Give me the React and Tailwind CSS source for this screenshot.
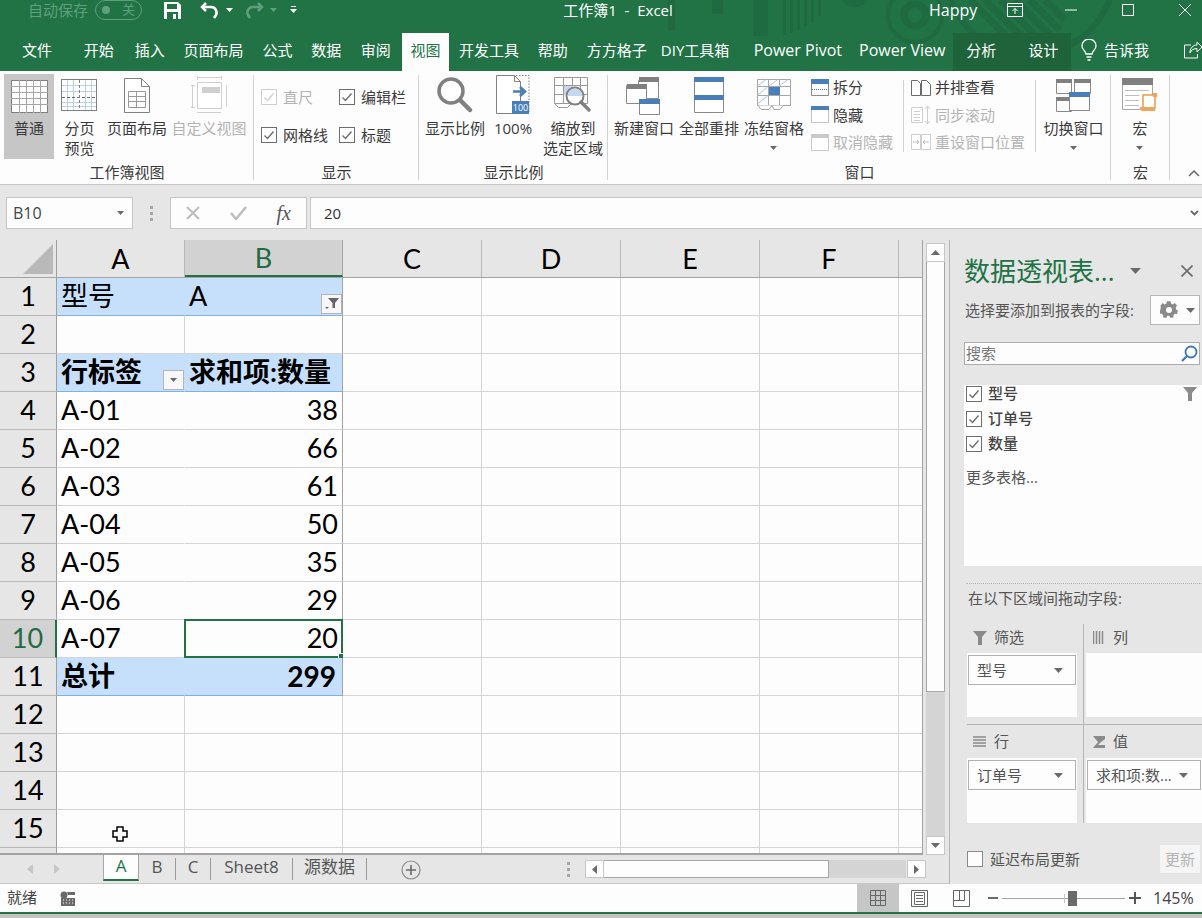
import React from "react";

const CJK = "[font-family:'Open_Sans','Noto_Sans_CJK_SC',sans-serif]";

function Caret({ c = "#6a6a6a", w = 9, h = 5 }) {
  return (
    <svg width={w} height={h} viewBox="0 0 9 5" className="shrink-0">
      <path d="M0 0h9L4.5 5z" fill={c} />
    </svg>
  );
}

function Check({ disabled = false }) {
  const b = disabled ? "#cfcfcf" : "#6e6e6e";
  const k = disabled ? "#cfcfcf" : "#6e6e6e";
  return (
    <svg width="16" height="16" viewBox="0 0 16 16" className="shrink-0">
      <rect x=".5" y=".5" width="15" height="15" fill="#fff" stroke={b} />
      <path d="M3.5 8.5l3 3 6-7" fill="none" stroke={k} strokeWidth="1.4" />
    </svg>
  );
}

function IconNormal() {
  const v = [8.5, 15.5, 22.5, 29.5];
  const h = [6.5, 12.5, 18.5, 24.5];
  return (
    <svg width="37" height="33" viewBox="0 0 37 33">
      <rect x=".5" y=".5" width="36" height="32" fill="#fff" stroke="#808080" />
      {v.map((x) => <path key={x} d={`M${x} 0v33`} stroke="#a6a6a6" />)}
      {h.map((y) => <path key={y} d={`M0 ${y}h37`} stroke="#a6a6a6" />)}
    </svg>
  );
}
function IconBreak() {
  return (
    <svg width="37" height="33" viewBox="0 0 37 33">
      <rect x=".5" y=".5" width="35" height="31" fill="#fff" stroke="#808080" />
      {[6, 12, 24, 30].map((x) => <path key={x} d={`M${x + .5} 1v30`} stroke="#b9d0ea" />)}
      {[6, 12, 23, 27].map((y) => <path key={y} d={`M1 ${y + .5}h34`} stroke="#b9d0ea" />)}
      <path d="M1 18.5h34" stroke="#6a6a6a" strokeDasharray="3 2" />
      <path d="M18.5 1v30" stroke="#808080" strokeDasharray="3 2" />
    </svg>
  );
}
function IconPage() {
  return (
    <svg width="26" height="35" viewBox="0 0 26 35">
      <path d="M.5.5h17l8 8v26H.5z" fill="#fff" stroke="#808080" />
      <path d="M17.5.5v8h8" fill="none" stroke="#808080" />
      <path d="M4.5 13.5h17v16h-17zM4.5 18.5h17M4.5 23.5h17M12.5 13.5v16" fill="none" stroke="#999" />
    </svg>
  );
}
function IconCustom() {
  return (
    <svg width="37" height="38" viewBox="0 0 37 38">
      <path d="M6 1.500h24M6.500 0v4M30.500 0v4M1.500 9v22M0 9.500h4M0 31.500h4" stroke="#cfcfcf" fill="none" />
      <path d="M6.500 6.500h24v26h-24z" fill="#fff" stroke="#cfcfcf" />
      <rect x="11" y="11" width="18" height="6" fill="#cfcfcf" />
      <path d="M35.500 9v22M6 36.500h24" stroke="#cfcfcf" />
    </svg>
  );
}
function IconMag() {
  return (
    <svg width="36" height="36" viewBox="0 0 36 36">
      <circle cx="14" cy="14" r="12" fill="#fff" stroke="#808080" strokeWidth="3.500" />
      <path d="M23 23l10 10" stroke="#808080" strokeWidth="4.500" strokeLinecap="round" />
    </svg>
  );
}
function Icon100() {
  return (
    <svg width="34" height="40" viewBox="0 0 34 40">
      <path d="M.5.500h18l6 6v32H.5z" fill="#fff" stroke="#808080" />
      <path d="M18.500.5v6h6" fill="none" stroke="#808080" />
      <path d="M20 .5h13v38H.5" fill="none" stroke="#808080" strokeDasharray="1.500 1.500" />
      <path d="M17 16.500h11M24 12l5 4.500-5 4.500" fill="none" stroke="#4a7ebb" strokeWidth="2.600" />
      <rect x="16" y="26" width="17" height="13" fill="#4a7ebb" />
      <text x="24.500" y="36" fill="#fff" fontSize="9" textAnchor="middle" fontFamily="Open Sans">100</text>
    </svg>
  );
}
function IconZoomSel() {
  return (
    <svg width="38" height="36" viewBox="0 0 38 36">
      <path d="M.5.500h33v26H.5zM.5 8.500h33M.5 17.500h33M9.500.5v26M18.500.5v12M26.500.5v12" fill="#fff" stroke="#999" />
      <path d="M.5 26.500l4 4h9l4-4" fill="none" stroke="#999" />
      <rect x="10" y="9" width="9" height="9" fill="#c5d8ee" />
      <circle cx="21" cy="19" r="8.500" fill="#fff" stroke="#808080" strokeWidth="2" />
      <path d="M13.500 19a7.500 7.500 0 0 1 15 0z" fill="#c5d8ee" />
      <path d="M27 25l8 8" stroke="#808080" strokeWidth="3.500" strokeLinecap="round" />
    </svg>
  );
}
function IconNewWin() {
  return (
    <svg width="36" height="39" viewBox="0 0 36 39">
      <path d="M12.500 4.500h20v18h-20z" fill="#fff" stroke="#8a8a8a" />
      <rect x="13" y="1" width="20" height="5" fill="#808080" />
      <path d="M.5 9.500h20v18H.5z" fill="#fff" stroke="#8a8a8a" />
      <rect x="1" y="8" width="20" height="5" fill="#808080" />
      <path d="M13.500 23.500h20v15h-20z" fill="#fff" stroke="#8a8a8a" />
      <rect x="13" y="23" width="21" height="5" fill="#4a7ebb" />
    </svg>
  );
}
function IconArrange() {
  return (
    <svg width="30" height="36" viewBox="0 0 30 36">
      <path d="M.5.5h29v35H.5z" fill="#fff" stroke="#8a8a8a" />
      <rect width="30" height="5" fill="#4a7ebb" />
      <rect y="18" width="30" height="5" fill="#4a7ebb" />
    </svg>
  );
}
function IconFreeze() {
  return (
    <svg width="34" height="32" viewBox="0 0 34 32">
      <path d="M.5.500h33v26H.5zM.5 7.500h33M.5 16.500h33M11.500.5v26M22.500.500v26" fill="#fff" stroke="#a6a6a6" />
      <rect x="12" y="8" width="11" height="8" fill="#4a7ebb" />
      <path d="M.5 7L9 .5M12 7l9-6.500M22 7l9-6.500M.5 16l10-8M.5 25l10-8" stroke="#a9c4e3" fill="none" />
      <path d="M1 26.500l3 4h8l3-4M15 26.500l2 4h6l3-4" fill="#fff" stroke="#a6a6a6" />
    </svg>
  );
}
function IconSwitch() {
  return (
    <svg width="35" height="33" viewBox="0 0 35 33">
      <path d="M.5.500h15v14H.5zM18.500.500h16v14h-16zM.5 18.500h15v14H.5z" fill="#fff" stroke="#8a8a8a" />
      <rect width="16" height="4" fill="#808080" />
      <rect x="18" width="17" height="4" fill="#808080" />
      <rect y="18" width="16" height="4" fill="#808080" />
      <path d="M13.500 13.500h20v18h-20z" fill="#fff" stroke="#8a8a8a" />
      <rect x="13" y="13" width="21" height="5" fill="#4a7ebb" />
    </svg>
  );
}
function IconMacro() {
  return (
    <svg width="36" height="35" viewBox="0 0 36 35">
      <path d="M.5.500h30v31H.5z" fill="#fff" stroke="#a6a6a6" />
      <rect x="0" y="0" width="31" height="7" fill="#808080" />
      <path d="M3 12.500h24M3 17.500h14M3 22.500h14M3 27.500h14" stroke="#bdbdbd" />
      <path d="M21 17h12v13H21z" fill="#fff" stroke="#e8994a" strokeWidth="1.500" />
      <path d="M18 29h15v4H21a3 3 0 0 1-3-3z" fill="#eda75c" />
      <rect x="31" y="15" width="4" height="4" fill="#eda75c" />
    </svg>
  );
}
function Split() {
  return (
    <svg width="18" height="17" viewBox="0 0 18 17" className="shrink-0">
      <path d="M.5.500h17v16H.5z" fill="#fff" stroke="#8a8a8a" />
      <rect width="18" height="5" fill="#4a7ebb" />
      <path d="M1 10.500h16" stroke="#4a7ebb" strokeDasharray="1 1" />
    </svg>
  );
}
function HideIcon() {
  return (
    <svg width="18" height="17" viewBox="0 0 18 17" className="shrink-0">
      <path d="M.5.500h17v16H.5z" fill="#fff" stroke="#8a8a8a" strokeDasharray="1 1" />
      <rect width="18" height="4" fill="#4a7ebb" />
    </svg>
  );
}
function UnhideIcon() {
  return (
    <svg width="18" height="17" viewBox="0 0 18 17" className="shrink-0">
      <path d="M.5.500h17v16H.5z" fill="#fff" stroke="#c9c9c9" />
      <rect width="18" height="4" fill="#c9c9c9" />
    </svg>
  );
}
function SideBySide() {
  return (
    <svg width="20" height="16" viewBox="0 0 20 16" className="shrink-0">
      <path d="M.5.500h6l3 3v12h-9zM10.500 .500h5l4 4v11h-9z" fill="#fff" stroke="#6a6a6a" />
    </svg>
  );
}
function SyncIcon() {
  return (
    <svg width="20" height="20" viewBox="0 0 20 20" className="shrink-0">
      <path d="M.5 2.500h11v15H.5zM3 6.500h6M3 9.500h6M3 12.500h6M3 15.500h6" fill="#fff" stroke="#cfcfcf" />
      <path d="M16.500 1v18M14 4l2.500-3L19 4M14 16l2.500 3 2.500-3" fill="none" stroke="#cfcfcf" />
    </svg>
  );
}
function ResetIcon() {
  return (
    <svg width="20" height="16" viewBox="0 0 20 16" className="shrink-0">
      <path d="M.5.500h9v15h-9zM10.500.500h9v15h-9z" fill="#fff" stroke="#cfcfcf" />
      <path d="M2 8h6M6 6l2 2-2 2M18 8h-6M14 6l-2 2 2 2" fill="none" stroke="#bdbdbd" />
    </svg>
  );
}

function Big({ w, icon, lines, disabled, caret, active }) {
  return (
    <div className={`flex flex-col items-center shrink-0 ${w} ${active ? "bg-[#c6c6c6] h-[85px] mt-[3px]" : "h-[88px]"}`}>
      <div className={`flex items-center justify-center ${active ? "h-[45px]" : "h-[48px]"}`}>{icon}</div>
      <div className={`text-[15px] leading-[20px] text-center whitespace-nowrap mt-[-1px] ${disabled ? "text-[#b4b4b4]" : "text-[#3a3a3a]"}`}>
        {lines.map((l) => <div key={l}>{l}</div>)}
        {caret && <div className="flex justify-center items-center h-[20px]"><Caret w={7} h={4} /></div>}
      </div>
    </div>
  );
}

function Small({ icon, label, disabled }) {
  return (
    <div className="flex items-center h-[28px] gap-[4px] whitespace-nowrap">
      {icon}
      <span className={`text-[15px] ${disabled ? "text-[#b4b4b4]" : "text-[#3a3a3a]"}`}>{label}</span>
    </div>
  );
}

function Group({ w, label, children, last }) {
  return (
    <div className={`flex flex-col shrink-0 ${w} ${last ? "" : "relative"}`}>
      <div className="h-[91px] flex">{children}</div>
      <div className="h-[20px] text-center text-[15px] leading-[20px] text-[#3a3a3a]">{label}</div>
      <div className="absolute right-0 top-[4px] bottom-[4px] w-px bg-[#d2d2d2]" />
    </div>
  );
}

function Ribbon() {
  return (
    <div className="h-[114px] bg-[#fdfdfd] border-b border-[#c8c8c8] flex relative">
      <Group w="w-[254px]" label="工作簿视图">
        <div className="flex pl-[4px]">
          <Big w="w-[50px]" active icon={<IconNormal />} lines={["普通"]} />
          <Big w="w-[51px]" icon={<IconBreak />} lines={["分页", "预览"]} />
          <Big w="w-[64px]" icon={<IconPage />} lines={["页面布局"]} />
          <Big w="w-[80px]" disabled icon={<IconCustom />} lines={["自定义视图"]} />
        </div>
      </Group>
      <Group w="w-[165px]" label="显示">
        <div className="grid grid-cols-[78px_78px] grid-rows-[38px_38px] pl-[7px] pt-[7px] text-[15px] text-[#3a3a3a]">
          <div className="flex items-center gap-[6px] text-[#b4b4b4]"><Check disabled />直尺</div>
          <div className="flex items-center gap-[6px]"><Check />编辑栏</div>
          <div className="flex items-center gap-[6px]"><Check />网格线</div>
          <div className="flex items-center gap-[6px]"><Check />标题</div>
        </div>
      </Group>
      <Group w="w-[189px]" label="显示比例">
        <div className="flex pl-[6px]">
          <Big w="w-[60px]" icon={<IconMag />} lines={["显示比例"]} />
          <Big w="w-[56px]" icon={<Icon100 />} lines={["100%"]} />
          <Big w="w-[64px]" icon={<IconZoomSel />} lines={["缩放到", "选定区域"]} />
        </div>
      </Group>
      <Group w="w-[503px]" label="窗口">
        <div className="flex pl-[4px]">
          <Big w="w-[64px]" icon={<IconNewWin />} lines={["新建窗口"]} />
          <Big w="w-[66px]" icon={<IconArrange />} lines={["全部重排"]} />
          <Big w="w-[64px]" icon={<IconFreeze />} lines={["冻结窗格"]} caret />
          <div className="flex flex-col pl-[5px] pt-[3px] w-[97px] h-[85px]">
            <Small icon={<Split />} label="拆分" />
            <Small icon={<HideIcon />} label="隐藏" />
            <Small disabled icon={<UnhideIcon />} label="取消隐藏" />
          </div>
          <div className="w-px h-[72px] mt-[9px] bg-[#d2d2d2]" />
          <div className="flex flex-col pl-[7px] pt-[3px] w-[131px] h-[85px]">
            <Small icon={<SideBySide />} label="并排查看" />
            <Small disabled icon={<SyncIcon />} label="同步滚动" />
            <Small disabled icon={<ResetIcon />} label="重设窗口位置" />
          </div>
          <div className="w-px h-[72px] mt-[9px] bg-[#d2d2d2]" />
          <Big w="w-[75px]" icon={<IconSwitch />} lines={["切换窗口"]} caret />
        </div>
      </Group>
      <Group w="w-[59px]" label="宏">
        <Big w="w-[58px]" icon={<IconMacro />} lines={["宏"]} caret />
      </Group>
      <div className="flex-1 relative">
        <svg width="12" height="7" viewBox="0 0 12 7" className="absolute left-[18px] top-[99px]">
          <path d="M1 6l5-5 5 5" fill="none" stroke="#6a6a6a" strokeWidth="1.500" />
        </svg>
      </div>
    </div>
  );
}

function TitleBar() {
  const tabs = [
    ["文件", "w-[74px]"], ["开始", "w-[50px]"], ["插入", "w-[52px]"], ["页面布局", "w-[76px]"], ["公式", "w-[52px]"],
    ["数据", "w-[46px]"], ["审阅", "w-[53px]"],
  ];
  const tabs2 = [
    ["开发工具", "w-[80px]", ""], ["帮助", "w-[48px]", ""], ["方方格子", "w-[80px]", ""], ["DIY工具箱", "w-[77px]", ""],
    ["Power Pivot", "w-[129px]", "text-[16px]"], ["Power View", "w-[80px]", "text-[16px]"],
  ];
  return (
    <div className="h-[71px] bg-[#217346] relative overflow-hidden text-white">
      <svg width="1202" height="71" viewBox="0 0 1202 71" className="absolute left-0 top-0">
        <g fill="#1f6a41">
          <rect x="668" y="0" width="7" height="30" />
          <rect x="712" y="0" width="11" height="14" />
          <rect x="753" y="0" width="15" height="36" />
          <rect x="783" y="0" width="3" height="35" />
          <rect x="790" y="0" width="3" height="33" />
          <rect x="797" y="0" width="3" height="30" />
          <rect x="804" y="0" width="3" height="26" />
          <rect x="811" y="0" width="3" height="22" />
          <rect x="818" y="0" width="3" height="16" />
          <path d="M843 0a12 7 0 0 0 24 0z" />
        </g>
        <g fill="none" stroke="#1f6a41">
          <circle cx="915" cy="15" r="11" strokeWidth="7" />
          <circle cx="915" cy="15" r="27" strokeWidth="4" />
          <path d="M970 0l62 62M985 0l62 62M1000 0l55 55M1015 0l42 42M1030 0l30 30M1045 0l20 20" strokeWidth="7" />
          <circle cx="1030" cy="-30" r="85" strokeWidth="6" />
        </g>
      </svg>
      <div className="relative flex h-[20px] mb-[13px] items-center">
        <div className="flex items-center w-[165px] pl-[28px] gap-[7px] text-[15px] text-[#5f9f7d]">
          <span className="whitespace-nowrap">自动保存</span>
          <div className="w-[47px] h-[20px] rounded-full border border-[#5f9f7d] flex items-center justify-between px-[6px] text-[13px]">
            <span className="w-[8px] h-[8px] rounded-full bg-[#5f9f7d]" />
            <span>关</span>
          </div>
        </div>
        <svg width="17" height="17" viewBox="0 0 17 17" className="ml-[-1px]">
          <path d="M0 0h14l3 3v14H0z" fill="#fff" />
          <rect x="3" y="2" width="10" height="5" fill="#217346" />
          <rect x="3" y="10" width="11" height="7" fill="#217346" />
          <rect x="9" y="12" width="3" height="5" fill="#fff" />
        </svg>
        <svg width="20" height="17" viewBox="0 0 20 17" className="ml-[19px]">
          <path d="M6 1L2 5l4 4" fill="none" stroke="#fff" strokeWidth="2.500" />
          <path d="M3 5h8a5.500 5.500 0 0 1 5 8l-2 3" fill="none" stroke="#fff" strokeWidth="2.500" />
        </svg>
        <span className="ml-[6px]"><Caret c="#fff" w={7} h={4} /></span>
        <svg width="20" height="17" viewBox="0 0 20 17" className="ml-[11px]">
          <path d="M14 1l4 4-4 4" fill="none" stroke="#5f9f7d" strokeWidth="2.500" />
          <path d="M17 5H9a5.500 5.500 0 0 0-5 8l2 3" fill="none" stroke="#5f9f7d" strokeWidth="2.500" />
        </svg>
        <span className="ml-[6px]"><Caret c="#5f9f7d" w={7} h={4} /></span>
        <svg width="7" height="8" viewBox="0 0 7 8" className="ml-[13px]">
          <path d="M1 .5h5" stroke="#fff" />
          <path d="M0 3h7L3.500 7z" fill="#fff" />
        </svg>
        <div className="w-[112px] ml-[265px] text-center text-[15px] whitespace-nowrap">工作簿1 &nbsp;-&nbsp; Excel</div>
        <span className="ml-[255px] w-[48px] text-[16px]">Happy</span>
        <svg width="16" height="14" viewBox="0 0 16 14" className="ml-[30px]">
          <path d="M.5.500h15v13H.5zM.5 3.500h15M8 11V5.500M5.500 8L8 5.500 10.500 8" fill="none" stroke="#fff" />
        </svg>
        <svg width="12" height="2" viewBox="0 0 12 2" className="ml-[42px]"><path d="M0 1h12" stroke="#fff" /></svg>
        <svg width="12" height="12" viewBox="0 0 12 12" className="ml-[45px]"><path d="M.5.500h11v11H.5z" fill="none" stroke="#fff" /></svg>
        <svg width="12" height="12" viewBox="0 0 12 12" className="ml-[45px]"><path d="M0 0l12 12M12 0L0 12" stroke="#fff" /></svg>
      </div>
      <div className="relative flex h-[38px] text-[15px]">
        {tabs.map(([t, w]) => (
          <div key={t} className={`${w} flex items-center justify-center whitespace-nowrap pb-[4px]`}>{t}</div>
        ))}
        <div className="w-[47px] bg-[#fdfdfd] text-[#217346] flex items-center justify-center pb-[4px]">视图</div>
        {tabs2.map(([t, w, s]) => (
          <div key={t} className={`${w} ${s} flex items-center justify-center whitespace-nowrap pb-[4px]`}>{t}</div>
        ))}
        <div className="w-[118px] bg-[#1e6339] flex items-center gap-[32px] pl-[13px] ml-[11px] pb-[4px] whitespace-nowrap">
          <span>分析</span>
          <span>设计</span>
        </div>
        <div className="flex items-center gap-[7px] ml-[10px] pb-[4px] whitespace-nowrap">
          <svg width="16" height="22" viewBox="0 0 16 22">
            <path d="M5 15c0-3-4-4-4-8a7 7 0 0 1 14 0c0 4-4 5-4 8zM5.500 18h5M6.500 21h3" fill="none" stroke="#fff" strokeWidth="1.300" />
          </svg>
          <span>告诉我</span>
        </div>
        <svg width="18" height="18" viewBox="0 0 18 18" className="ml-[35px] mt-[8px]">
          <path d="M7 4H.5v13h13v-4M6 12c0-5 3-8 7-8V1l5 5-5 5V7.500c-3 0-6 1.500-7 4.500z" fill="none" stroke="#fff" />
        </svg>
      </div>
    </div>
  );
}

function FormulaBar() {
  return (
    <div className="h-[55px] bg-[#e6e6e6] flex items-start pt-[12px]">
      <div className="ml-[6px] w-[127px] h-[32px] bg-[#fdfdfd] border border-[#c6c6c6] flex items-center justify-between pl-[6px] pr-[8px] text-[16px] text-[#444]">
        <span>B10</span>
        <Caret w={7} h={4} />
      </div>
      <div className="w-[37px] h-[32px] flex flex-col items-center justify-center gap-[3px]">
        <span className="w-[3px] h-[3px] bg-[#a6a6a6]" />
        <span className="w-[3px] h-[3px] bg-[#a6a6a6]" />
        <span className="w-[3px] h-[3px] bg-[#a6a6a6]" />
      </div>
      <div className="w-[137px] h-[32px] bg-[#fdfdfd] border border-[#c6c6c6] flex items-center justify-between pl-[15px] pr-[15px]">
        <svg width="14" height="14" viewBox="0 0 14 14"><path d="M1 1l12 12M13 1L1 13" stroke="#bdbdbd" strokeWidth="2" /></svg>
        <svg width="17" height="14" viewBox="0 0 17 14"><path d="M1 7l5 6L16 1" fill="none" stroke="#bdbdbd" strokeWidth="2.500" /></svg>
        <span className="italic text-[20px] text-[#555] [font-family:'Liberation_Serif',serif]">fx</span>
      </div>
      <div className="ml-[3px] flex-1 h-[32px] bg-[#fdfdfd] border border-[#c6c6c6] border-r-0 flex items-center justify-between pl-[13px] pr-[3px] text-[15px] text-[#333]">
        <span>20</span>
        <svg width="9" height="6" viewBox="0 0 9 6"><path d="M1 1l3.500 3.500L8 1" fill="none" stroke="#666" strokeWidth="1.800" /></svg>
      </div>
    </div>
  );
}

const cols = ["A", "B", "C", "D", "E", "F"];
const colW = ["w-[128px]", "w-[158px]", "w-[139px]", "w-[139px]", "w-[139px]", "w-[139px]"];
const data = [
  ["A-01", "38"], ["A-02", "66"], ["A-03", "61"], ["A-04", "50"], ["A-05", "35"], ["A-06", "29"], ["A-07", "20"],
];

function DropBtn({ filter }) {
  return (
    <div className="absolute right-0 bottom-[1px] w-[21px] h-[20px] bg-[#f7f7f7] border border-[#b5b5b5] flex items-center justify-center">
      {filter ? (
        <svg width="14" height="12" viewBox="0 0 14 12">
          <path d="M3 0h11L10 5v5H7.500V5z" fill="#666" />
          <path d="M0 9h4l-2 2z" fill="#666" />
        </svg>
      ) : <Caret w={7} h={4} />}
    </div>
  );
}

function Cell({ w, className = "", children }) {
  return <div className={`${w} h-full shrink-0 relative border-r border-b border-[#d4d4d4] px-[4px] pb-[2px] flex items-center whitespace-nowrap ${className}`}>{children}</div>;
}

function RowHead({ n, active }) {
  return (
    <div className={`w-[57px] h-full shrink-0 flex items-center justify-center pb-[2px] border-r border-[#9f9f9f] border-b ${active ? "bg-[#d2d2d2] text-[#1f6b43] border-b-[#bdbdbd] border-r-[#217346] border-r-2" : "bg-[#e6e6e6] text-black border-b-[#b9b9b9]"}`}>
      {n}
    </div>
  );
}

function Rest() {
  return (
    <>
      {colW.slice(2).map((w, i) => <Cell key={i} w={w} />)}
      <div className="flex-1 border-b border-[#d4d4d4]" />
    </>
  );
}

function Row({ n, children, active, h = "h-[38px]" }) {
  return (
    <div className={`${h} flex shrink-0`}>
      <RowHead n={n} active={active} />
      {children}
      <Rest />
    </div>
  );
}

const pivotA = "bg-[#c6dffa] border-r-[#c6dffa] border-b-[#7fb0e6]";
const pivotB = "bg-[#c6dffa] border-r-[#a3a3a3] border-b-[#7fb0e6]";

function Sheet() {
  return (
    <div className="w-[924px] h-[615px] relative overflow-hidden bg-[#fdfdfd] border-r border-b-2 border-[#a3a3a3] [font-family:Lato,'Noto_Sans_CJK_SC',sans-serif] text-[27px] leading-none text-black">
      <div className="h-[38px] flex bg-[#e6e6e6] border-b border-[#a3a3a3] relative">
        <div className="w-[57px] shrink-0 flex items-end justify-end pr-[3px] pb-[3px] border-r border-[#9f9f9f]">
          <svg width="30" height="30" viewBox="0 0 30 30"><path d="M30 0v30H0z" fill="#b9b9b9" /></svg>
        </div>
        {cols.map((c, i) => (
          <div key={c} className={`${colW[i]} shrink-0 flex items-center justify-center border-r ${c === "B" ? "bg-[#d2d2d2] text-[#1f6b43] border-b-2 border-b-[#217346] border-r-[#a3a3a3]" : "border-r-[#b9b9b9]"}`}>{c}</div>
        ))}
      </div>

      <Row n="1">
        <Cell w={colW[0]} className={pivotA}>型号</Cell>
        <Cell w={colW[1]} className={pivotB}>A<DropBtn filter /></Cell>
      </Row>
      <Row n="2">
        <Cell w={colW[0]} />
        <Cell w={colW[1]} className="border-r-[#a3a3a3]" />
      </Row>
      <Row n="3">
        <Cell w={colW[0]} className={`${pivotA} font-bold`}>行标签<DropBtn /></Cell>
        <Cell w={colW[1]} className={`${pivotB} font-bold`}>求和项:数量</Cell>
      </Row>
      {data.map(([a, b], i) => (
        <Row key={a} n={String(i + 4)} active={i === 6}>
          <Cell w={colW[0]} className="border-r-transparent">{a}</Cell>
          <Cell w={colW[1]} className="justify-end border-r-[#a3a3a3]">
            {b}
            {i === 6 && (
              <span className="absolute left-[-1px] top-[-1px] right-[-1px] bottom-[-1px] border-2 border-[#217346]">
                <span className="absolute right-[-3px] bottom-[-3px] w-[6px] h-[6px] bg-[#217346] border border-white" />
              </span>
            )}
          </Cell>
        </Row>
      ))}
      <Row n="11">
        <Cell w={colW[0]} className={`${pivotA} font-bold`}>总计</Cell>
        <Cell w={colW[1]} className={`${pivotB} justify-end font-bold pr-[6px] text-[28px]`}>299</Cell>
      </Row>
      {[12, 13, 14, 15].map((n) => (
        <Row key={n} n={String(n)}>
          <Cell w={colW[0]} />
          <Cell w={colW[1]} />
        </Row>
      ))}
      <Row n="" h="h-[8px]">
        <Cell w={colW[0]} />
        <Cell w={colW[1]} />
      </Row>
      <svg width="16" height="16" viewBox="0 0 16 16" className="absolute left-[112px] top-[586px]">
        <path d="M5 1h6v4h4v6h-4v4H5v-4H1V5h4z" fill="#fff" stroke="#000" strokeWidth="1.500" />
      </svg>
    </div>
  );
}

function VScroll() {
  return (
    <div className="w-[26px] h-[615px] flex flex-col pl-[3px] pr-[4px] pt-[3px] pb-[0px] bg-[#e6e6e6]">
      <div className="h-[19px] bg-[#fdfdfd] border border-[#c6c6c6] flex items-center justify-center">
        <svg width="9" height="5" viewBox="0 0 9 5"><path d="M0 5h9L4.500 0z" fill="#6a6a6a" /></svg>
      </div>
      <div className="h-[430px] bg-[#fdfdfd] border border-t-0 border-[#a6a6a6]" />
      <div className="flex-1 bg-[#d4d4d4]" />
      <div className="h-[19px] bg-[#fdfdfd] border border-[#c6c6c6] flex items-center justify-center">
        <Caret />
      </div>
    </div>
  );
}

function SheetTabs() {
  const tab = "h-[22px] mt-[3px] flex items-center justify-center border-r border-[#9a9a9a] text-[#555] text-[17px] pb-[4px]";
  return (
    <div className="h-[29px] bg-[#e6e6e6] flex items-start border-b border-[#c8c8c8]">
      <div className="w-[103px] h-full flex items-center pl-[27px] gap-[21px]">
        <svg width="6" height="10" viewBox="0 0 6 10"><path d="M6 0v10L0 5z" fill="#c6c6c6" /></svg>
        <svg width="6" height="10" viewBox="0 0 6 10"><path d="M0 0v10l6-5z" fill="#c6c6c6" /></svg>
      </div>
      <div className="w-[36px] h-[26px] bg-[#fdfdfd] border-l border-r border-[#a6a6a6] border-b-2 border-b-[#217346] flex items-center justify-center text-[#217346] text-[17px] pb-[2px]">A</div>
      <div className={`w-[37px] ${tab}`}>B</div>
      <div className={`w-[35px] ${tab}`}>C</div>
      <div className={`w-[82px] ${tab}`}>Sheet8</div>
      <div className={`w-[74px] ${tab}`}>源数据</div>
      <svg width="20" height="20" viewBox="0 0 20 20" className="ml-[34px] mt-[5px]">
        <circle cx="10" cy="10" r="9" fill="none" stroke="#8a8a8a" strokeWidth="1.200" />
        <path d="M10 5v10M5 10h10" stroke="#6a6a6a" strokeWidth="1.600" />
      </svg>
      <div className="w-[3px] h-full flex flex-col items-center justify-center gap-[3px] ml-[146px]">
        <span className="w-[3px] h-[3px] bg-[#a6a6a6]" />
        <span className="w-[3px] h-[3px] bg-[#a6a6a6]" />
        <span className="w-[3px] h-[3px] bg-[#a6a6a6]" />
      </div>
      <div className="ml-[15px] mt-[5px] flex h-[18px]">
        <div className="w-[19px] bg-[#fdfdfd] border border-[#c6c6c6] flex items-center justify-center">
          <svg width="5" height="9" viewBox="0 0 5 9"><path d="M5 0v9L0 4.500z" fill="#6a6a6a" /></svg>
        </div>
        <div className="w-[225px] bg-[#fdfdfd] border border-l-0 border-[#a6a6a6]" />
        <div className="w-[77px] bg-[#d4d4d4]" />
        <div className="w-[19px] ml-[1px] bg-[#fdfdfd] border border-[#c6c6c6] flex items-center justify-center">
          <svg width="5" height="9" viewBox="0 0 5 9"><path d="M0 0v9l5-4.500z" fill="#6a6a6a" /></svg>
        </div>
      </div>
    </div>
  );
}

function Dropdown({ label, w = "" }) {
  return (
    <div className={`h-[30px] mx-[1px] bg-[#fdfdfd] border border-[#b0b0b0] flex items-center justify-between pl-[8px] pr-[12px] text-[15px] text-[#555] whitespace-nowrap ${w}`}>
      <span>{label}</span>
      <Caret w={9} h={5} />
    </div>
  );
}

function AreaHead({ icon, label, h = "h-[29px]", pb = "pb-[2px]" }) {
  return (
    <div className={`${h} ${pb} flex items-center gap-[7px] pl-[5px] text-[15px] text-[#555]`}>
      <span className="w-[15px] flex justify-center">{icon}</span>
      <span>{label}</span>
    </div>
  );
}

function Pane() {
  const field = "flex items-center gap-[6px] h-[25px] pl-[2px] text-[15px] text-[#444] font-medium";
  return (
    <div className="flex-1 h-full bg-[#e6e6e6] flex flex-col">
      <div className="flex items-center h-[30px] mt-[16px] pl-[14px] relative">
        <span className="text-[26px] text-[#217346] whitespace-nowrap leading-none w-[152px]">数据透视表...</span>
        <span className="ml-[14px]"><Caret w={11} h={6} /></span>
        <svg width="12" height="12" viewBox="0 0 12 12" className="ml-[40px]"><path d="M.5.5l11 11M11.5.5l-11 11" stroke="#6a6a6a" strokeWidth="1.600" /></svg>
      </div>
      <div className="flex items-center h-[30px] mt-[9px] pl-[15px]">
        <span className="text-[15px] text-[#555] whitespace-nowrap w-[185px]">选择要添加到报表的字段:</span>
        <div className="w-[50px] h-[30px] bg-[#fdfdfd] border border-[#b5b5b5] flex items-center justify-between pl-[9px] pr-[4px]">
          <svg width="18" height="18" viewBox="0 0 18 18">
            <path d="M7 0h4l.5 2.500 2 .9L15.700 2l2.300 2.800-1.400 2 .4 2.200 2 1.200-1 3.500-2.500-.2-1.500 1.600.2 2.400-3.700.5-1-2.200h-2l-1 2.200-3.700-.5.200-2.400-1.500-1.600-2.500.2-1-3.500 2-1.200.4-2.200L0 4.800 2.300 2l2.200 1.400 2-.9z" fill="#8a8a8a" transform="scale(.92) translate(.5 .3)" />
            <circle cx="9" cy="9" r="3" fill="#fdfdfd" />
          </svg>
          <Caret w={9} h={5} />
        </div>
      </div>
      <div className="h-[23px] mt-[17px] ml-[14px] mr-[2px] bg-[#fdfdfd] border border-[#ababab] flex items-center justify-between pl-[1px] pr-[1px] text-[15px] text-[#777]">
        <span>搜索</span>
        <svg width="18" height="18" viewBox="0 0 18 18">
          <circle cx="11" cy="7" r="5.500" fill="none" stroke="#3d77b8" strokeWidth="1.800" />
          <path d="M7 11l-5 5" stroke="#3d77b8" strokeWidth="2.200" />
        </svg>
      </div>
      <div className="h-[181px] mt-[20px] ml-[14px] bg-[#fdfdfd] relative">
        <div className="mt-[-4px]">
          <div className={field}><Check />型号</div>
          <div className={field}><Check />订单号</div>
          <div className={field}><Check />数量</div>
        </div>
        <div className="text-[15px] text-[#555] pl-[2px] mt-[10px]">更多表格...</div>
        <svg width="14" height="14" viewBox="0 0 14 14" className="absolute right-[5px] top-[2px]">
          <path d="M0 0h14L9 6v8H5V6z" fill="#8a8a8a" />
        </svg>
      </div>
      <div className="mt-[17px] ml-[16px] border-t border-dotted border-[#b5b5b5]" />
      <div className="mt-[4px] ml-[18px] h-[20px] text-[15px] leading-[20px] text-[#555] whitespace-nowrap">在以下区域间拖动字段:</div>
      <div className="mt-[16px] ml-[17px] flex flex-col">
        <div className="flex h-[101px] border-b border-[#b5b5b5]">
          <div className="w-[117px] pr-[6px] border-r border-[#b5b5b5]">
            <AreaHead label="筛选" icon={<svg width="14" height="14" viewBox="0 0 14 14"><path d="M0 0h14L9 6v8H5V6z" fill="#8a8a8a" /></svg>} />
            <div className="h-[64px] bg-[#fdfdfd] pt-[2px]"><Dropdown label="型号" /></div>
          </div>
          <div className="w-[118px] pl-[2px]">
            <AreaHead label="列" icon={<svg width="11" height="13" viewBox="0 0 11 13"><path d="M.5 0v13M3.500 0v13M6.500 0v13M9.500 0v13" stroke="#8a8a8a" strokeWidth="1.500" /></svg>} />
            <div className="h-[64px] bg-[#fdfdfd]" />
          </div>
        </div>
        <div className="flex h-[98px]">
          <div className="w-[117px] pr-[6px] border-r border-[#b5b5b5]">
            <AreaHead h="h-[33px]" pb="pb-[0px]" label="行" icon={<svg width="13" height="11" viewBox="0 0 13 11"><path d="M0 1h13M0 4h13M0 7h13M0 10h13" stroke="#8a8a8a" strokeWidth="1.500" /></svg>} />
            <div className="h-[65px] bg-[#fdfdfd] pt-[2px]"><Dropdown label="订单号" /></div>
          </div>
          <div className="w-[118px] pl-[2px]">
            <AreaHead h="h-[33px]" pb="pb-[0px]" label="值" icon={<svg width="13" height="12" viewBox="0 0 13 12"><path d="M13 3V0H1l5 6-5 6h12V9H6l3-3z" fill="#8a8a8a" /></svg>} />
            <div className="h-[65px] bg-[#fdfdfd] pt-[2px]"><Dropdown label="求和项:数..." w="pr-[5px]" /></div>
          </div>
        </div>
      </div>
      <div className="flex items-center mt-[22px] ml-[17px] h-[28px]">
        <span className="w-[16px] h-[16px] bg-[#fdfdfd] border border-[#8a8a8a]" />
        <span className="ml-[7px] text-[15px] text-[#555] whitespace-nowrap w-[170px]">延迟布局更新</span>
        <div className="w-[40px] h-[28px] bg-[#f5f5f5] flex items-center justify-center text-[15px] text-[#b4b4b4]">更新</div>
      </div>
    </div>
  );
}

function StatusBar() {
  return (
    <div className="h-[28px] bg-[#fdfdfd] flex items-center text-[15px] text-[#444]">
      <span className="ml-[7px] pb-[2px]">就绪</span>
      <svg width="15" height="15" viewBox="0 0 15 15" className="ml-[23px]">
        <circle cx="4" cy="4" r="3.500" fill="#6a6a6a" />
        <path d="M7 1h8v3H8zM1 7h14v8H1z" fill="#6a6a6a" />
        <path d="M3 9h1M6 9h1M9 9h1M12 9h1M3 12h1M6 12h1M9 12h1M12 12h1" stroke="#fff" />
      </svg>
      <div className="flex-1" />
      <div className="w-[42px] h-full bg-[#c6c6c6] flex items-center justify-center">
        <svg width="16" height="16" viewBox="0 0 16 16"><path d="M.5.500h15v15H.5zM5.500.5v15M10.500.5v15M.5 5.500h15M.5 10.500h15" fill="none" stroke="#666" /></svg>
      </div>
      <svg width="17" height="17" viewBox="0 0 17 17" className="ml-[12px]"><path d="M.5.500h16v16H.5zM3.500 2.500h10v12h-10zM5 5.500h7M5 8.500h7M5 11.500h7" fill="none" stroke="#666" /></svg>
      <svg width="17" height="17" viewBox="0 0 17 17" className="ml-[25px]"><path d="M.5.500h16v16H.5zM.5 10.500h11V.5M6.500.5v10" fill="none" stroke="#666" /></svg>
      <span className="ml-[18px] w-[10px] h-[2px] bg-[#6a6a6a]" />
      <div className="ml-[4px] w-[123px] h-[1px] bg-[#a6a6a6] relative">
        <span className="absolute left-[62px] top-[-4px] w-px h-[9px] bg-[#c6c6c6]" />
        <span className="absolute left-[66px] top-[-7px] w-[9px] h-[15px] bg-[#6a6a6a]" />
      </div>
      <svg width="12" height="12" viewBox="0 0 12 12" className="ml-[4px]"><path d="M0 6h12M6 0v12" stroke="#555" strokeWidth="2" /></svg>
      <span className="ml-[12px] w-[49px] text-[16px] whitespace-nowrap">145%</span>
    </div>
  );
}

export default function App() {
  return (
    <div className={`w-[1202px] h-[918px] overflow-hidden flex flex-col bg-[#e6e6e6] ${CJK}`}>
      <TitleBar />
      <Ribbon />
      <FormulaBar />
      <div className="h-[644px] flex shrink-0">
        <div className="w-[950px] h-full flex flex-col border-r border-[#b5b5b5]">
          <div className="flex">
            <Sheet />
            <VScroll />
          </div>
          <SheetTabs />
        </div>
        <Pane />
      </div>
      <StatusBar />
      <div className="h-[2px] bg-[#217346]" />
      <div className="flex-1 bg-[#c4c4c4]" />
    </div>
  );
}
